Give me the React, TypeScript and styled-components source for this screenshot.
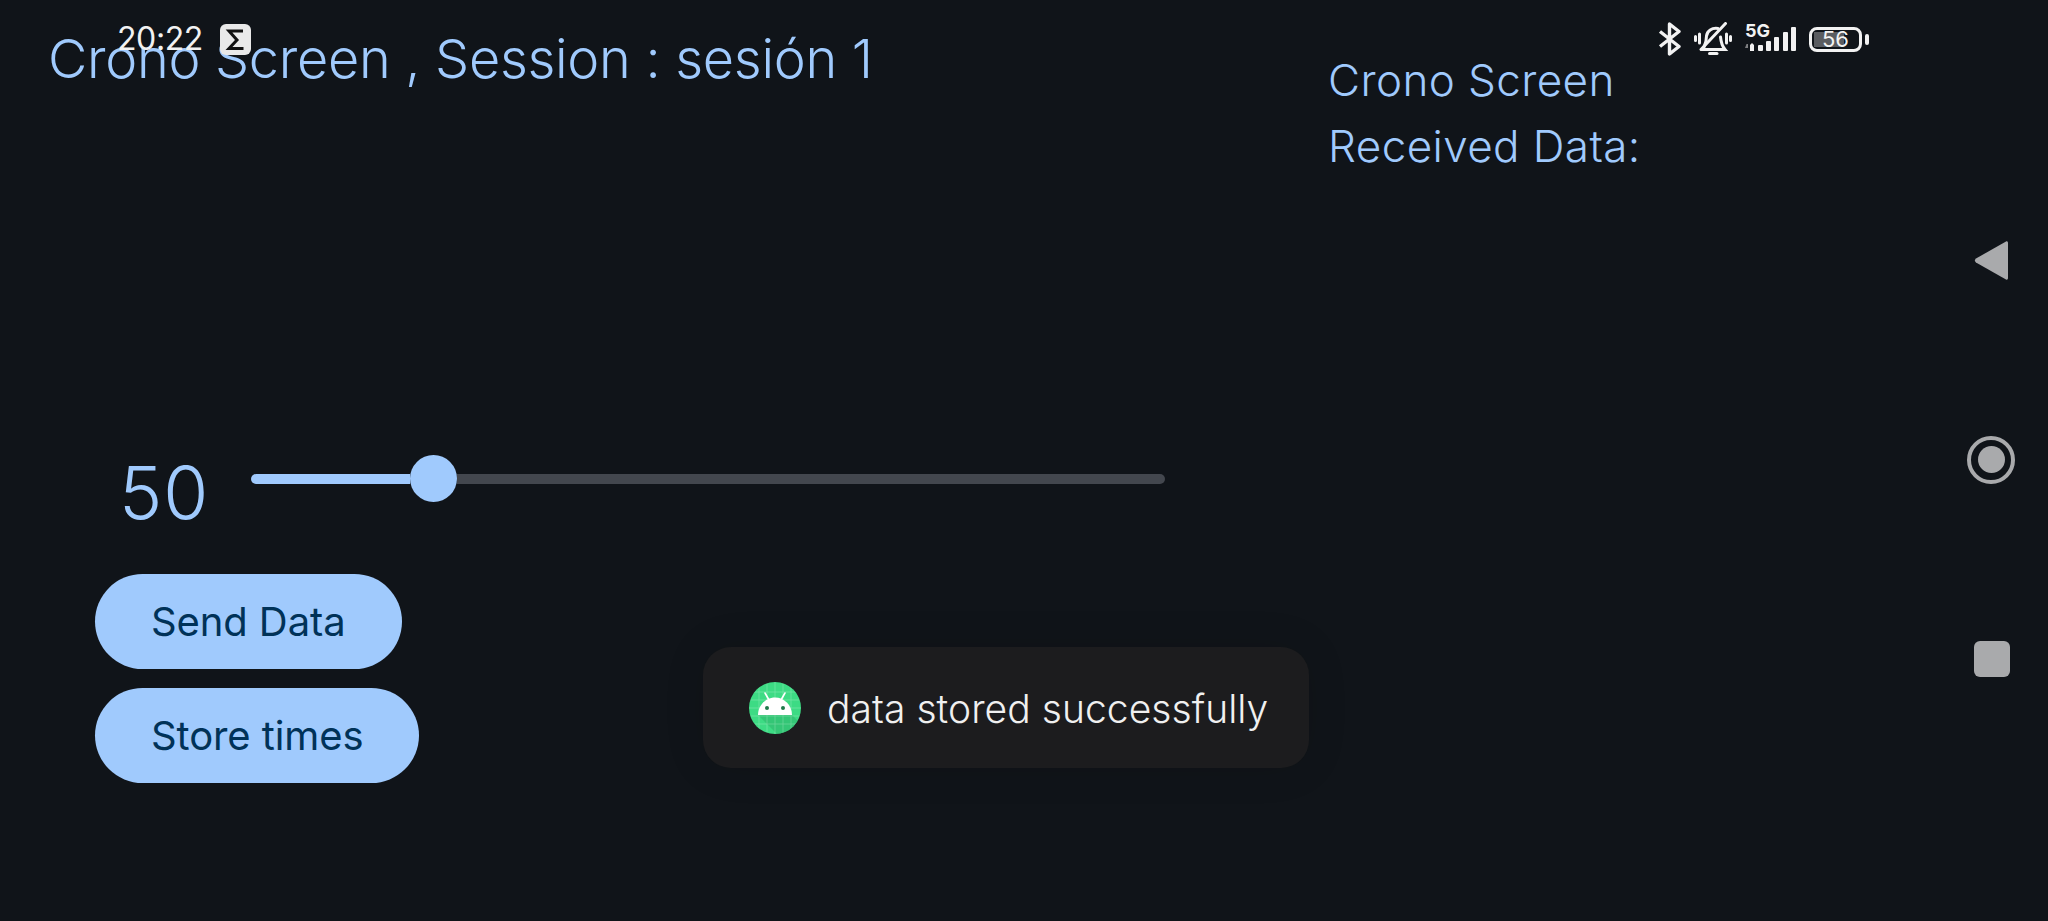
import * as React from 'react';
import styled, { createGlobalStyle } from 'styled-components';

const GlobalStyle = createGlobalStyle`
  html, body {
    margin: 0;
    padding: 0;
    background: #101419;
  }

  body {
    font-family: Inter, "Noto Sans", sans-serif;
  }
`;

const Screen = styled.div`
  position: relative;
  display: flex;
  width: 2048px;
  height: 921px;
  overflow: hidden;
  background: #101419;
  color: #a0cafd;
`;

const LeftPane = styled.div`
  display: flex;
  flex-direction: column;
  align-items: flex-start;
  width: 1328px;
  padding: 23px 0 0 48px;
  box-sizing: border-box;
`;

const Title = styled.div`
  font-size: 54px;
  line-height: 72px;
  font-weight: 300;
  letter-spacing: -0.3px;
  white-space: nowrap;
`;

const SliderRow = styled.div`
  display: flex;
  align-items: flex-start;
  margin: 360px 0 0 71px;
`;

const SliderValue = styled.div`
  width: 132px;
  padding-top: 2px;
  font-size: 73px;
  line-height: 72px;
  font-weight: 300;
  letter-spacing: 1px;
`;

const Slider = styled.div`
  display: flex;
  align-items: center;
  width: 914px;
  height: 47px;
`;

const ActiveTrack = styled.div`
  height: 10px;
  background: #a0cafd;
  border-radius: 5px 0 0 5px;
`;

const Thumb = styled.div`
  flex: none;
  width: 47px;
  height: 47px;
  border-radius: 50%;
  background: #a0cafd;
`;

const InactiveTrack = styled.div`
  flex: 1;
  height: 10px;
  background: #43474e;
  border-radius: 0 5px 5px 0;
`;

const Buttons = styled.div`
  display: flex;
  flex-direction: column;
  align-items: flex-start;
  gap: 19px;
  margin: 45px 0 0 47px;
`;

const PillButton = styled.button`
  height: 95px;
  padding: 0 56px;
  border: none;
  border-radius: 48px;
  background: #a0cafd;
  color: #003258;
  font-family: inherit;
  font-size: 40px;
  font-weight: 400;
  letter-spacing: -0.1px;
  white-space: nowrap;
`;

const RightPane = styled.div`
  flex: 1;
  padding-top: 47px;
  font-size: 44px;
  line-height: 66px;
  font-weight: 300;
  letter-spacing: 0.4px;
`;

const NavRail = styled.div`
  flex: none;
  width: 114px;
  padding-bottom: 2px;
  box-sizing: border-box;
  display: flex;
  flex-direction: column;
  align-items: center;
  justify-content: center;
  gap: 151px;
`;

const NavSlot = styled.div`
  width: 48px;
  height: 48px;
  display: flex;
  align-items: center;
  justify-content: center;
`;

const HomeRing = styled.div`
  width: 48px;
  height: 48px;
  box-sizing: border-box;
  border: 4px solid #a9aaac;
  border-radius: 50%;
  display: flex;
  align-items: center;
  justify-content: center;

  &::after {
    content: '';
    width: 27px;
    height: 27px;
    border-radius: 50%;
    background: #a9aaac;
  }
`;

const RecentSquare = styled.div`
  width: 36px;
  height: 36px;
  margin-left: 2px;
  border-radius: 6px;
  background: #a9aaac;
`;

const StatusBar = styled.div`
  position: absolute;
  top: 22px;
  left: 117px;
  right: 179px;
  height: 34px;
  display: flex;
  justify-content: space-between;
  align-items: center;
  color: #f2f2f2;
`;

const StatusGroup = styled.div`
  display: flex;
  align-items: center;
`;

const Clock = styled.div`
  font-size: 32px;
  line-height: 34px;
  font-weight: 400;
  letter-spacing: -0.4px;
  margin-right: 17px;
`;

const NotifBadge = styled.div`
  width: 31px;
  height: 31px;
  border-radius: 6px;
  background: #e9e9e9;
  display: flex;
  align-items: center;
  justify-content: center;
`;

const BellSlot = styled.div`
  display: flex;
  margin-left: 12px;
`;

const SignalBox = styled.div`
  position: relative;
  width: 52px;
  height: 30px;
  margin: 0 12px 0 13px;
`;

const SignalSvg = styled.svg`
  position: absolute;
  left: 0;
  top: 0;
`;

const FiveG = styled.span`
  position: absolute;
  top: -2px;
  left: 0;
  font-size: 18px;
  line-height: 18px;
  font-weight: 700;
`;

const Battery = styled.div`
  position: relative;
  width: 53px;
  height: 25px;
  box-sizing: border-box;
  border: 3px solid #f2f2f2;
  border-radius: 8px;
  margin-right: 7px;
  display: flex;
  align-items: center;
  justify-content: center;
  font-size: 22px;
  font-weight: 400;
  line-height: 19px;
  background: linear-gradient(#5a5c60, #5a5c60) 2px 2px / 30px 15px no-repeat;

  &::after {
    content: '';
    position: absolute;
    right: -10px;
    top: 4px;
    width: 4px;
    height: 11px;
    border-radius: 2px;
    background: #f2f2f2;
  }
`;

const Toast = styled.div`
  position: absolute;
  left: 703px;
  top: 647px;
  width: 606px;
  height: 121px;
  box-sizing: border-box;
  padding-left: 46px;
  display: flex;
  align-items: center;
  gap: 26px;
  background: #1c1c1e;
  border-radius: 28px;
  box-shadow: 0 0 40px rgba(0, 0, 0, 0.12);
`;

const ToastText = styled.span`
  margin-top: 2px;
  color: #f0f0f0;
  font-size: 39px;
  font-weight: 300;
  letter-spacing: 0.05px;
  white-space: nowrap;
`;

const SLIDER_WIDTH = 914;
const THUMB = 47;

const BluetoothIcon = () => (
    <svg width="24" height="34" viewBox="0 0 24 34" fill="none" stroke="#f2f2f2" strokeWidth="3.4" strokeLinejoin="round">
        <path d="M2 9.5 L21 24.5 L11.5 32 V2 L21 9.5 L2 24.5"/>
    </svg>
);

const MutedBellIcon = () => (
    <svg width="38" height="34" viewBox="0 0 38 34" fill="none" stroke="#f2f2f2" strokeWidth="3" strokeLinecap="round">
        <path d="M10 25 C12 21 12.5 17 12.5 14 C13 9 18 5.5 24 6.5"/>
        <path d="M26.5 15 C27 20 28 24 31 27.5 H8"/>
        <path d="M15.5 31.5 H23"/>
        <path d="M31.5 1.5 L7 27.5"/>
        <path d="M5.5 12 V21 M1.5 14.5 V18.5 M32.5 12 V21 M36.5 14.5 V18.5"/>
    </svg>
);

const SignalBars = () => (
    <SignalSvg width="52" height="30" viewBox="0 0 52 30">
        <path d="M0 24 H3 V20 H1.5 Z" fill="#7d7e81"/>
        <path d="M5 21 L7 19 L9 21 V27 H5 Z" fill="#f2f2f2"/>
        <rect x="13" y="21" width="5" height="6" rx="1" fill="#f2f2f2"/>
        <rect x="21" y="17" width="5" height="10" rx="1" fill="#f2f2f2"/>
        <rect x="29" y="13" width="5" height="14" rx="1" fill="#f2f2f2"/>
        <rect x="38" y="8" width="5" height="19" rx="1" fill="#f2f2f2"/>
        <rect x="46" y="3" width="5" height="24" rx="1" fill="#f2f2f2"/>
    </SignalSvg>
);

const HourglassIcon = () => (
    <svg width="23" height="23" viewBox="0 0 23 23" fill="none" stroke="#111" strokeWidth="3">
        <path d="M19 3 H5 L13 12 L5 20.5 H19.5"/>
    </svg>
);

const BackIcon = () => (
    <svg width="34" height="41" viewBox="0 0 34 41">
        <path d="M32 1.5 C33 1 34 1.8 34 3 V38 C34 39.5 33 40 32 39.5 L2 22.5 C0.5 21.5 0.5 19.5 2 18.5 Z" fill="#a9aaac"/>
    </svg>
);

const AndroidIcon = () => (
    <svg width="52" height="52" viewBox="0 0 52 52">
        <defs>
            <clipPath id="androidClip"><circle cx="26" cy="26" r="26"/></clipPath>
        </defs>
        <g clipPath="url(#androidClip)">
            <rect width="52" height="52" fill="#3ddc84"/>
            <path d="M9 33 H43 L52 42 V52 H28 Z" fill="#2fb56c" opacity="0.55"/>
            <path d="M10 0 V52 M18 0 V52 M26 0 V52 M34 0 V52 M42 0 V52 M0 10 H52 M0 18 H52 M0 26 H52 M0 34 H52 M0 42 H52" stroke="#fff" strokeWidth="0.7" opacity="0.28"/>
        </g>
        <path d="M16 11 L20 18 M36 11 L32 18" stroke="#fff" strokeWidth="1.6" strokeLinecap="round"/>
        <path d="M9 33 C9 23 17 15.5 26 15.5 C35 15.5 43 23 43 33 Z" fill="#fff"/>
        <circle cx="18" cy="26" r="2" fill="#1f7a4a"/>
        <circle cx="34" cy="26" r="2" fill="#1f7a4a"/>
    </svg>
);

const App = () =>
{
    const value = 50;
    const max = 250;
    const activeWidth = SLIDER_WIDTH * value / max - THUMB / 2;

    return (
        <Screen>
            <GlobalStyle/>
            <LeftPane>
                <Title>Crono Screen , Session : sesión 1</Title>
                <SliderRow>
                    <SliderValue>{ value }</SliderValue>
                    <Slider>
                        <ActiveTrack style={ { width: activeWidth } }/>
                        <Thumb/>
                        <InactiveTrack/>
                    </Slider>
                </SliderRow>
                <Buttons>
                    <PillButton>Send Data</PillButton>
                    <PillButton>Store times</PillButton>
                </Buttons>
            </LeftPane>
            <RightPane>
                <div>Crono Screen</div>
                <div>Received Data:</div>
            </RightPane>
            <NavRail>
                <NavSlot><BackIcon/></NavSlot>
                <NavSlot><HomeRing/></NavSlot>
                <NavSlot><RecentSquare/></NavSlot>
            </NavRail>
            <StatusBar>
                <StatusGroup>
                    <Clock>20:22</Clock>
                    <NotifBadge><HourglassIcon/></NotifBadge>
                </StatusGroup>
                <StatusGroup>
                    <BluetoothIcon/>
                    <BellSlot><MutedBellIcon/></BellSlot>
                    <SignalBox>
                        <FiveG>5G</FiveG>
                        <SignalBars/>
                    </SignalBox>
                    <Battery>56</Battery>
                </StatusGroup>
            </StatusBar>
            <Toast>
                <AndroidIcon/>
                <ToastText>data stored successfully</ToastText>
            </Toast>
        </Screen>
    );
};

export default App;
